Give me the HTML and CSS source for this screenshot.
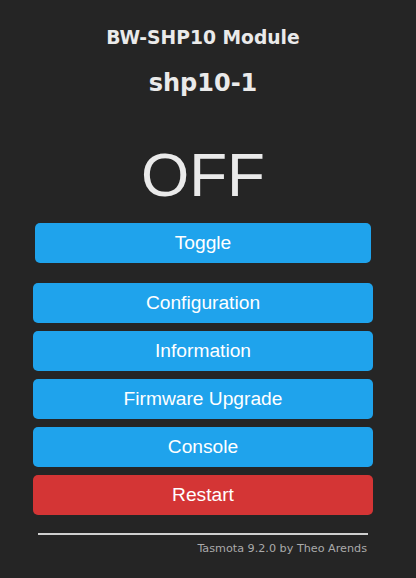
FILE: index.html
```html
<!DOCTYPE html>
<html lang="en">

<head>
     <meta charset="UTF-8">
     <meta name="viewport" content="width=device-width, initial-scale=1.0">
     <title>shp10-1 - Main Menu</title>
     <link rel="stylesheet" href="styles.css">
</head>

<body>
     <div id="wrapper">
          <h3 class="module">BW-SHP10 Module</h3>
          <h2 class="devname">shp10-1</h2>

          <div id="state">OFF</div>

          <div class="toggle-row">
               <button class="btn" id="toggleBtn">Toggle</button>
          </div>

          <div class="menu">
               <button class="btn">Configuration</button>
               <button class="btn">Information</button>
               <button class="btn">Firmware Upgrade</button>
               <button class="btn">Console</button>
               <button class="btn btn-red">Restart</button>
          </div>

          <div class="footer">
               <hr>
               <a href="#">Tasmota 9.2.0 by Theo Arends</a>
          </div>
     </div>
</body>

</html>
```

FILE: styles.css
```css
* {
     padding: 0;
     margin: 0;
     box-sizing: border-box;
}

body {
     background: #252525;
     color: #eaeaea;
     font-family: "DejaVu Sans", Verdana, sans-serif;
}

#wrapper {
     width: 340px;
     margin-left: 33px;
     display: flex;
     flex-direction: column;
}

.module {
     margin-top: 27px;
     font-size: 18.72px;
     line-height: 22px;
     text-align: center;
}

.devname {
     margin-top: 20px;
     font-size: 24px;
     line-height: 28px;
     text-align: center;
}

#state {
     margin-top: 42px;
     font-family: "Liberation Sans", Arial, sans-serif;
     font-size: 62px;
     line-height: 71px;
     text-align: center;
}

.toggle-row {
     margin-top: 13px;
     padding: 0 2px;
}

.btn {
     display: block;
     width: 100%;
     height: 40px;
     border: none;
     border-radius: 5px;
     background: #1fa3ec;
     color: #fff;
     font-family: "Liberation Sans", Arial, sans-serif;
     font-size: 19.2px;
     line-height: 40px;
     cursor: pointer;
}

.btn-red {
     background: #d43535;
}

.menu {
     margin-top: 20px;
     display: flex;
     flex-direction: column;
     gap: 8px;
}

.footer {
     margin-top: 18px;
     padding: 0 5px;
     text-align: right;
     font-size: 11.2px;
}

.footer hr {
     border: none;
     border-top: 2px solid #cfcfcf;
     margin-bottom: 7px;
}

.footer a {
     color: #aaa;
     text-decoration: none;
     margin-right: 1px;
}
```
